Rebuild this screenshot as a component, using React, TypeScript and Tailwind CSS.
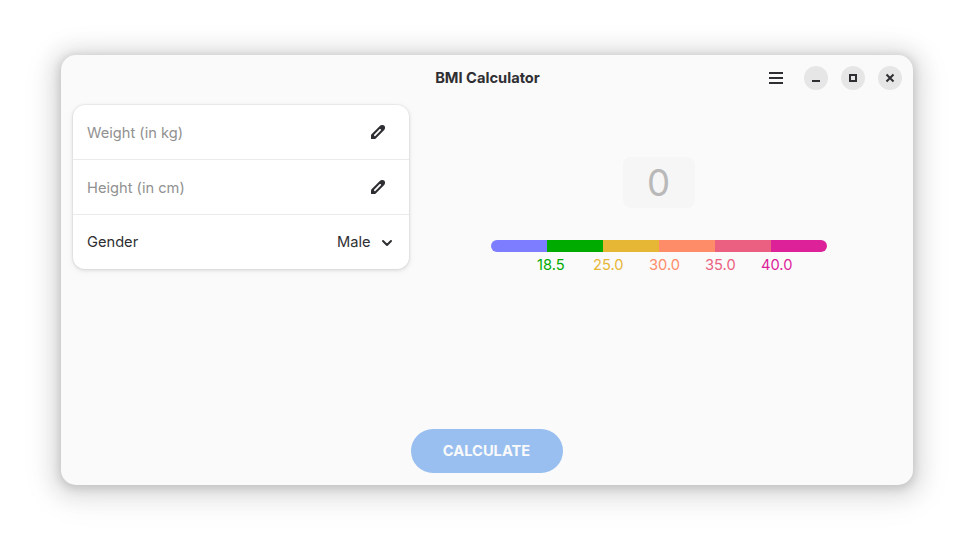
import React, { useState } from "react";

const scale = [
  { color: "bg-[#7d7dff]", label: "", text: "" },
  { color: "bg-[#00ab00]", label: "18.5", text: "text-[#00ab00]" },
  { color: "bg-[#e6b635]", label: "25.0", text: "text-[#e6b635]" },
  { color: "bg-[#ff8c69]", label: "30.0", text: "text-[#ff8c69]" },
  { color: "bg-[#eb6080]", label: "35.0", text: "text-[#eb6080]" },
  { color: "bg-[#dd2299]", label: "40.0", text: "text-[#dd2299]" },
];

function PencilIcon() {
  return (
    <svg width="16" height="16" viewBox="0 0 16 16" fill="#2f2f33" fillRule="evenodd">
      <path d="M1 15v-3.4c0-.5.2-1 .55-1.35l8.5-8.5A2.6 2.6 0 0 1 11.9 1h.6A2.5 2.5 0 0 1 15 3.5v.6c0 .7-.27 1.35-.76 1.84l-8.5 8.5c-.36.36-.84.56-1.35.56ZM4.1 10.7a.9.9 0 0 0 1.25 1.25l5.6-5.6a.9.9 0 0 0-1.25-1.25Z" />
    </svg>
  );
}

function EntryRow({ label }: { label: string }) {
  return (
    <div className="flex h-[55px] items-center justify-between border-b border-[#ebebeb] pl-3.5 pr-[23px]">
      <span className="pt-0.5 text-[#919191]">{label}</span>
      <PencilIcon />
    </div>
  );
}

function WindowButton({ children }: { children: React.ReactNode }) {
  return (
    <button className="flex size-6 items-center justify-center rounded-full bg-[#e6e6e6]">
      <svg width="16" height="16" viewBox="0 0 16 16" fill="none" stroke="#2f2f33" strokeWidth="2">
        {children}
      </svg>
    </button>
  );
}

export default function App() {
  const [score] = useState(0);
  return (
    <div className="h-[552px] w-[974px] bg-white pl-[61px] pt-[55px] font-['Inter',sans-serif] text-[14.67px] text-[#2f2f33]">
      <main className="flex h-[430px] w-[852px] flex-col rounded-[15px] bg-[#fafafa] shadow-[0_2px_8px_2px_rgba(0,0,0,0.13),0_3px_20px_10px_rgba(0,0,0,0.09),0_6px_32px_16px_rgba(0,0,0,0.04)]">
        <header className="grid h-[46px] grid-cols-[1fr_auto_1fr] items-center pr-[11px]">
          <span />
          <h1 className="pl-3 font-bold">BMI Calculator</h1>
          <div className="flex items-center justify-end gap-[13px]">
            <svg className="mr-[7px]" width="16" height="16" viewBox="0 0 16 16" fill="none" stroke="#2f2f33" strokeWidth="2">
              <path d="M1 3h14M1 8h14M1 13h14" />
            </svg>
            <WindowButton><path d="M4 11h8" /></WindowButton>
            <WindowButton><path d="M5 5h6v6H5Z" /></WindowButton>
            <WindowButton><path d="m4.5 4.5 7 7m0-7-7 7" /></WindowButton>
          </div>
        </header>
        <div className="flex h-[328px] pl-3 pt-1">
          <section className="h-[164px] w-[336px] rounded-xl bg-white shadow-[0_0_0_1px_rgba(0,0,0,0.03),0_1px_3px_1px_rgba(0,0,0,0.07),0_2px_6px_2px_rgba(0,0,0,0.03)]">
            <EntryRow label="Weight (in kg)" />
            <EntryRow label="Height (in cm)" />
            <div className="flex h-[54px] items-center pl-3.5 pr-3.5">
              <span className="flex-1">Gender</span>
              <span>Male</span>
              <svg className="ml-[8.5px]" width="16" height="16" viewBox="0 0 16 16" fill="none" stroke="#2f2f33" strokeWidth="2" strokeLinecap="round" strokeLinejoin="round">
                <path d="m4 7 4 4 4-4" />
              </svg>
            </div>
          </section>
          <section className="ml-[82px] flex w-[336px] flex-col items-center pt-[52px]">
            <output className="flex h-[51px] w-[72px] items-center justify-center rounded-lg bg-[#f6f6f6] pr-px text-[36.67px] font-normal text-[#b9b9b9]">{score}</output>
            <div className="mt-8 flex h-3 w-full overflow-hidden rounded-full">
              {scale.map((s) => <div key={s.color} className={"flex-1 " + s.color} />)}
            </div>
            <div className="mt-0.5 flex w-full pl-[46px]">
              {scale.slice(1).map((s) => <span key={s.label} className={"w-14 " + s.text}>{s.label}</span>)}
            </div>
          </section>
        </div>
        <button className="h-11 w-[152px] self-center rounded-full bg-[#98bff0] pr-px font-bold text-[#fafafa]">CALCULATE</button>
      </main>
    </div>
  );
}
